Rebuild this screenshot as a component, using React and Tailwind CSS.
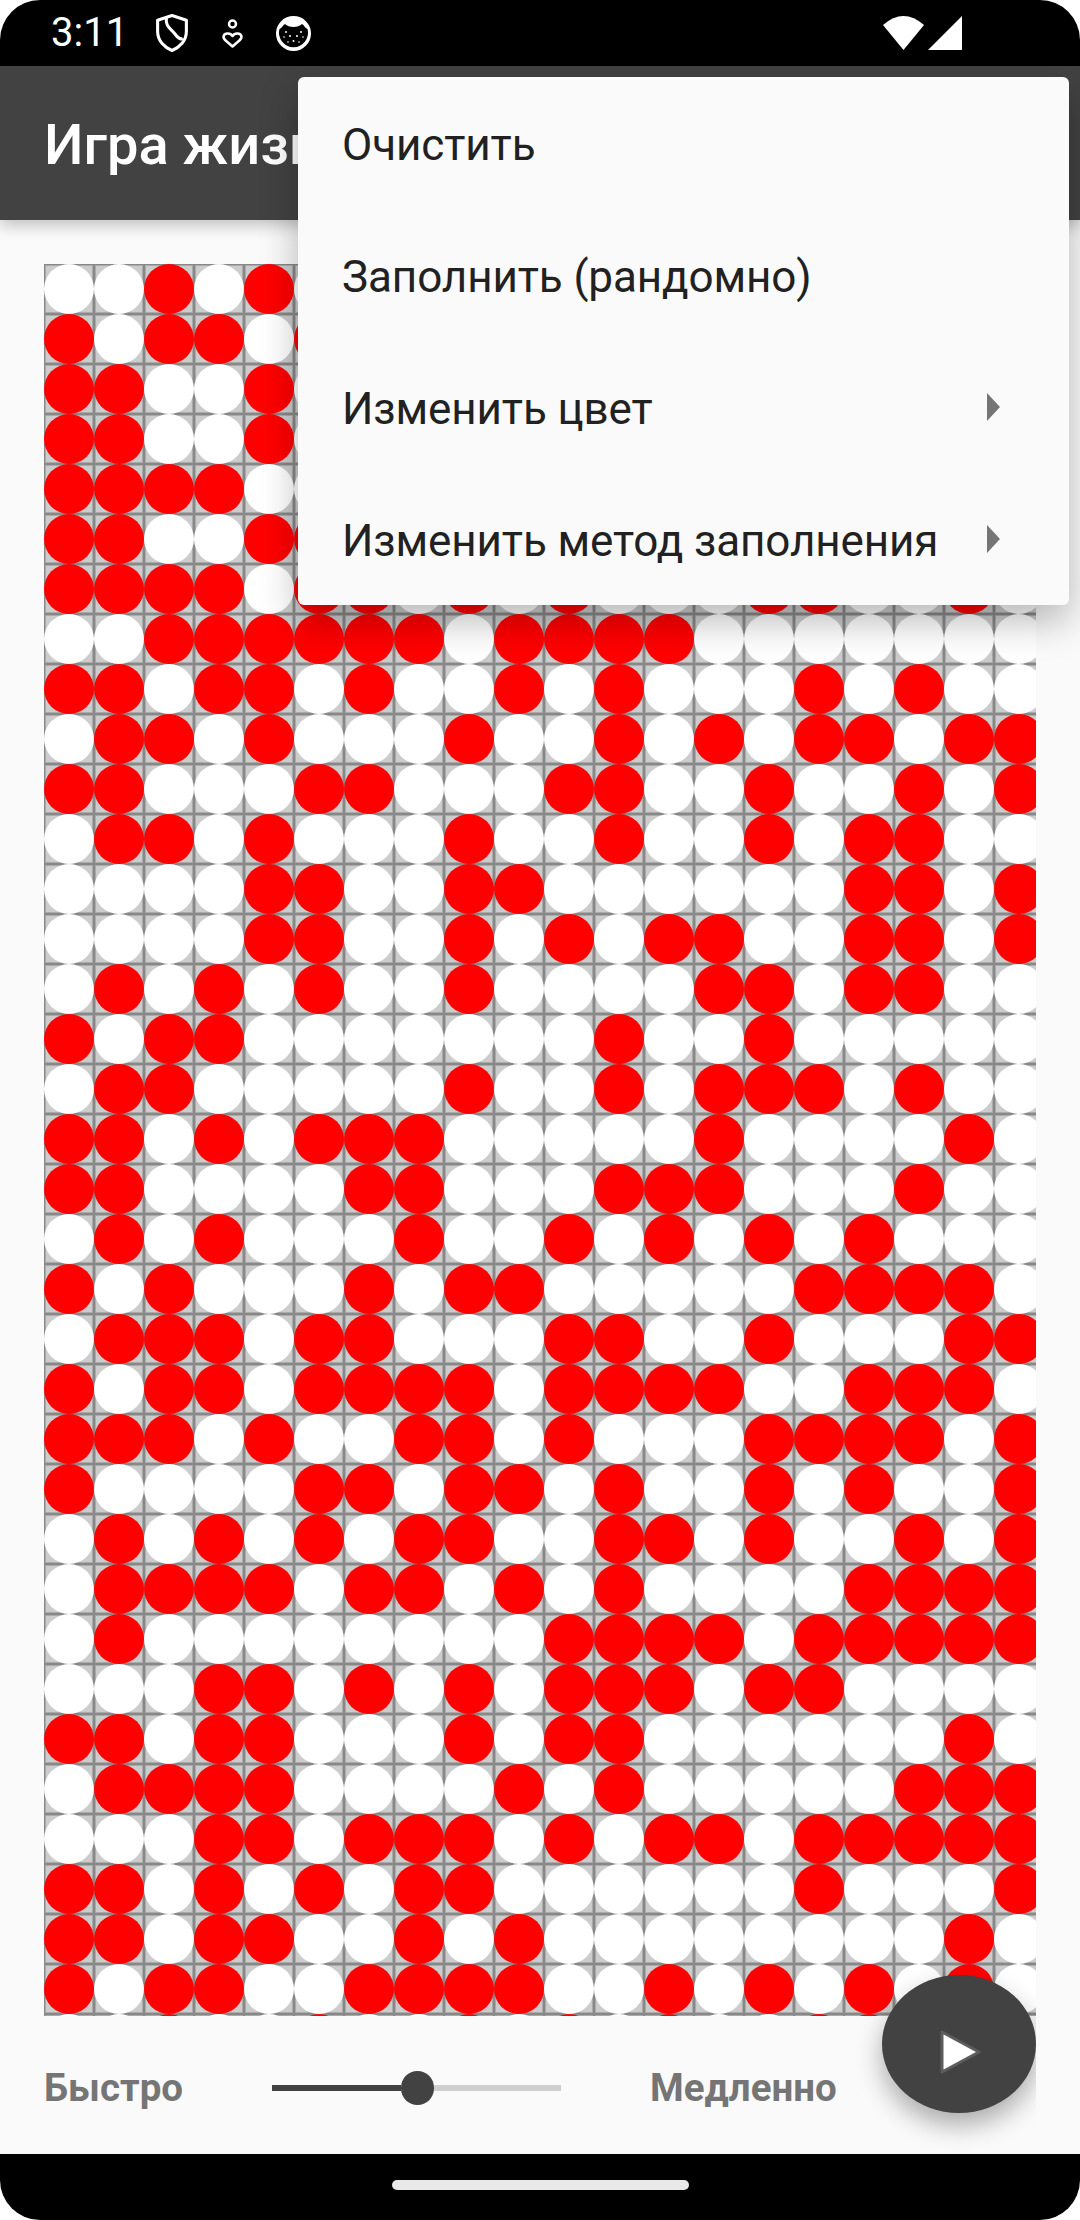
import React from 'react';

// board as seen on screen: 1 = red, . = white (36th row is only a sliver)
const BOARD = [
  '..1.1.1.1.1..1..1.1.',
  '1.11.1..1..1.1.1..1.',
  '11..1..1.1..1..11..1',
  '11..1.1..1.1...1.1.1',
  '1111..1.1.1.1...11..',
  '11..11..1..1.1.1..1.',
  '1111.11.1.1...11..1.',
  '..111111.1111.......',
  '11.11.1..1.1...1.1..',
  '.11.1...1..1.1.11.11',
  '11...11...11..1..1.1',
  '.11.1...1..1..1.11..',
  '....11..11......11.1',
  '....11..1.1.11..11.1',
  '.1.1.1..1....11.11..',
  '1.11.......1..1.....',
  '.11.....1..1.111.1..',
  '11.1.111.....1....1.',
  '11....11...111...1..',
  '.1.1...1..1.1.1.1...',
  '1.1...1.11.....1111.',
  '.111.11...11..1...11',
  '1.11.1111.1111..111.',
  '111.1..11.1...1111.1',
  '1....11.11.1..1.1..1',
  '.1.1.1.11..11.1..1.1',
  '.1111.11.1.1....1111',
  '.1........1111.11111',
  '...11.1.1.111.11....',
  '11.11...1.11......1.',
  '.1111....1.1.....111',
  '...11.111.1.11.11111',
  '11.1.1.11......1...1',
  '11.11..1.1........1.',
  '1.11..1111..1.1.1.1.',
  '..1..1..1.1.1..11...',
];

const MENU = [
  { label: 'Очистить' },
  { label: 'Заполнить (рандомно)' },
  { label: 'Изменить цвет', sub: true },
  { label: 'Изменить метод заполнения', sub: true },
];

const ShieldIcon = () => (
  <svg width="32" height="38" viewBox="0 0 31 37" fill="none" stroke="#fff" strokeWidth="3" strokeLinejoin="round">
    <path d="M15.5 1.5 L29.5 6 V17 C29.5 26 23 32.5 15.5 35.5 C8 32.5 1.5 26 1.5 17 V6 Z" />
    <path d="M10 4 C9 12 14 14 18 19 C21 23 23 25 26 24" />
  </svg>
);

const HeartPersonIcon = () => (
  <svg width="21" height="29" viewBox="0 0 21 29" fill="none" stroke="#fff" strokeWidth="2.5" strokeLinejoin="round">
    <circle cx="10.5" cy="5" r="3.5" />
    <path d="M10.5 17 C8 13 1.5 14 1.5 18 C1.5 20 3 21 10.5 27.5 C18 21 19.5 20 19.5 18 C19.5 14 13 13 10.5 17 Z" />
  </svg>
);

const CatIcon = () => (
  <svg width="35" height="35" viewBox="0 0 35 35">
    <circle cx="17.5" cy="17.5" r="17.5" fill="#fff" />
    <path d="M3.5 13 C6 12 7 9 9 8 C11 10 14 11 17.5 11 C21 11 24 10 26 8 C28 9 29 12 31.5 13 A14.5 14.5 0 1 1 3.5 13 Z" fill="#000" />
    <g fill="#fff">
      <circle cx="10" cy="16" r="1" />
      <circle cx="25" cy="16" r="1" />
      <circle cx="14" cy="20" r="1" />
      <circle cx="21" cy="20" r="1" />
      <circle cx="17.5" cy="25" r="1" />
      <circle cx="8" cy="21" r="0.8" />
      <circle cx="27" cy="21" r="0.8" />
      <circle cx="12" cy="26" r="0.8" />
      <circle cx="23" cy="26" r="0.8" />
    </g>
  </svg>
);

const WifiIcon = () => (
  <svg width="41" height="34" viewBox="0 0 41 34">
    <path d="M0 9 Q20.5 -9 41 9 L20.5 34 Z" fill="#fff" />
  </svg>
);

const SignalIcon = () => (
  <svg width="34" height="34" viewBox="0 0 34 34">
    <polygon points="34,0 34,34 0,34" fill="#fff" />
  </svg>
);

const SubArrow = () => (
  <svg width="13" height="28" viewBox="0 0 13 28">
    <polygon points="0,0 13,14 0,28" fill="#757575" />
  </svg>
);

const Board = () => (
  <div className="ml-[44px] mt-[44px] grid h-[1752px] w-[992px] shrink-0 grid-cols-[repeat(20,50px)] auto-rows-[50px] overflow-hidden">
    {BOARD.map((row, r) =>
      row.split('').map((c, i) => (
        <div key={r + '-' + i} className="size-[50px] bg-[#cccccc] shadow-[inset_0_0_0_1px_#888888,inset_0_0_0_2px_#aaaaaa]">
          <div className={c === '1' ? 'size-full rounded-full bg-[#ff0000]' : 'size-full rounded-full bg-white'} />
        </div>
      ))
    )}
  </div>
);

const App = () => {
  return (
    <div className="h-[2220px] w-[1080px] bg-white font-['Roboto',sans-serif]">
      <div className="relative flex h-full flex-col overflow-hidden rounded-[40px] bg-black">
        <div className="flex h-[66px] shrink-0 items-center pl-[51px] pr-[118px] text-[40px] text-white">
          <span className="w-[105px] leading-none">3:11</span>
          <ShieldIcon />
          <span className="ml-[34px]"><HeartPersonIcon /></span>
          <span className="ml-[33px]"><CatIcon /></span>
          <span className="ml-auto"><WifiIcon /></span>
          <span className="ml-[4px]"><SignalIcon /></span>
        </div>

        <div className="relative z-10 flex h-[154px] shrink-0 items-center bg-[#424242] pl-[44px] pt-[4px] shadow-[0_6px_14px_rgba(0,0,0,0.22)]">
          <h1 className="text-[56px] font-medium text-white">Игра жизни</h1>
        </div>

        <div className="flex min-h-0 flex-1 flex-col bg-[#fafafa]">
          <Board />
          <div className="flex flex-1 items-center pl-[44px] pt-[6px] text-[38.5px] font-bold text-[#757575]">
            <span className="w-[228px]">Быстро</span>
            <div className="flex w-[289px] items-center">
              <div className="h-[6px] w-[129px] bg-[#424242]" />
              <div className="h-[34px] w-[33px] rounded-full bg-[#424242]" />
              <div className="h-[6px] flex-1 bg-[#cfcfcf]" />
            </div>
            <span className="ml-[89px]">Медленно</span>
          </div>
        </div>

        <div className="flex h-[66px] shrink-0 items-center justify-center pb-[4px]">
          <div className="h-[10px] w-[297px] rounded-full bg-[#e8e8e8]" />
        </div>

        {/* fab shadow gets cut at the right edge of the content */}
        <div className="absolute left-[782px] top-[1875px] flex h-[279px] w-[254px] justify-end overflow-hidden pt-[100px]">
          <button className="flex h-[138px] w-[154px] items-center justify-center rounded-[50%] bg-[#424242] pl-[3px] pt-[16px] shadow-[0_12px_26px_rgba(0,0,0,0.32)]">
            <svg width="43" height="46" viewBox="0 0 43 46">
              <polygon points="3,3 40,23 3,43" fill="#fff" stroke="#5c5c5c" strokeWidth="3" strokeLinejoin="round" />
            </svg>
          </button>
        </div>

        <div className="absolute left-[298px] top-[77px] z-20 w-[771px] rounded-[6px] bg-[#fafafa] shadow-[0_16px_38px_rgba(0,0,0,0.28)]">
          {MENU.map(item => (
            <div key={item.label} className="flex h-[132px] items-center justify-between pl-[44px] pr-[69px] text-[44px] tracking-[-0.1px] text-[#212121]">
              <span className="pt-[4px]">{item.label}</span>
              {item.sub && <SubArrow />}
            </div>
          ))}
        </div>
      </div>
    </div>
  );
};

export default App;
